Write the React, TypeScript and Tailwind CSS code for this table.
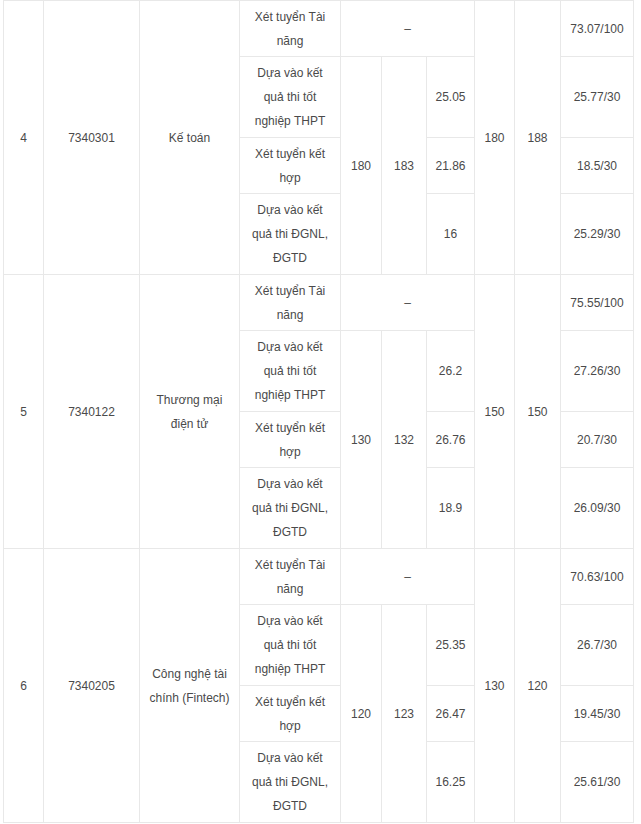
type Block = {
  stt: string;
  code: string;
  name: string;
  q1: string;
  q2: string;
  thpt: string;
  kh: string;
  dgnl: string;
  t1: string;
  t2: string;
  scores: string[];
};

const blocks: Block[] = [
  {
    stt: "4",
    code: "7340301",
    name: "Kế toán",
    q1: "180",
    q2: "183",
    thpt: "25.05",
    kh: "21.86",
    dgnl: "16",
    t1: "180",
    t2: "188",
    scores: ["73.07/100", "25.77/30", "18.5/30", "25.29/30"],
  },
  {
    stt: "5",
    code: "7340122",
    name: "Thương mại điện tử",
    q1: "130",
    q2: "132",
    thpt: "26.2",
    kh: "26.76",
    dgnl: "18.9",
    t1: "150",
    t2: "150",
    scores: ["75.55/100", "27.26/30", "20.7/30", "26.09/30"],
  },
  {
    stt: "6",
    code: "7340205",
    name: "Công nghệ tài chính (Fintech)",
    q1: "120",
    q2: "123",
    thpt: "25.35",
    kh: "26.47",
    dgnl: "16.25",
    t1: "130",
    t2: "120",
    scores: ["70.63/100", "26.7/30", "19.45/30", "25.61/30"],
  },
];

const td = "border border-[#e8e8e8] px-2 py-[3px] text-center align-middle";
const method = "border border-[#e8e8e8] px-[9px] py-[3px] text-center align-middle";

export default function App() {
  return (
    <div
      className="min-h-screen bg-white pl-[3px] text-[12px] leading-6 text-[#4a4a4a]"
      style={{ fontFamily: '"Liberation Sans", Arial, sans-serif' }}
    >
      <table className="w-[630px] table-fixed border-collapse">
        <colgroup>
          <col className="w-[40px]" />
          <col className="w-[96px]" />
          <col className="w-[100px]" />
          <col className="w-[101px]" />
          <col className="w-[41px]" />
          <col className="w-[45px]" />
          <col className="w-[48px]" />
          <col className="w-[40px]" />
          <col className="w-[46px]" />
          <col className="w-[73px]" />
        </colgroup>
        <tbody>
          {blocks.map((b) => (
            <BlockRows key={b.stt} b={b} />
          ))}
        </tbody>
      </table>
    </div>
  );
}

function BlockRows({ b }: { b: Block }) {
  return (
    <>
      <tr className="h-[56px]">
        <td rowSpan={4} className={td}>{b.stt}</td>
        <td rowSpan={4} className={td}>{b.code}</td>
        <td rowSpan={4} className={td}>{b.name}</td>
        <td className={method}>Xét tuyển Tài năng</td>
        <td colSpan={3} className={td}>–</td>
        <td rowSpan={4} className={td}>{b.t1}</td>
        <td rowSpan={4} className={td}>{b.t2}</td>
        <td className={td}>{b.scores[0]}</td>
      </tr>
      <tr className="h-[81px]">
        <td className={method}>Dựa vào kết quả thi tốt nghiệp THPT</td>
        <td rowSpan={3} className={td}>{b.q1}</td>
        <td rowSpan={3} className={td}>{b.q2}</td>
        <td className={td}>{b.thpt}</td>
        <td className={td}>{b.scores[1]}</td>
      </tr>
      <tr className="h-[56px]">
        <td className={method}>Xét tuyển kết hợp</td>
        <td className={td}>{b.kh}</td>
        <td className={td}>{b.scores[2]}</td>
      </tr>
      <tr className="h-[81px]">
        <td className={method}>Dựa vào kết quả thi ĐGNL, ĐGTD</td>
        <td className={td}>{b.dgnl}</td>
        <td className={td}>{b.scores[3]}</td>
      </tr>
    </>
  );
}
